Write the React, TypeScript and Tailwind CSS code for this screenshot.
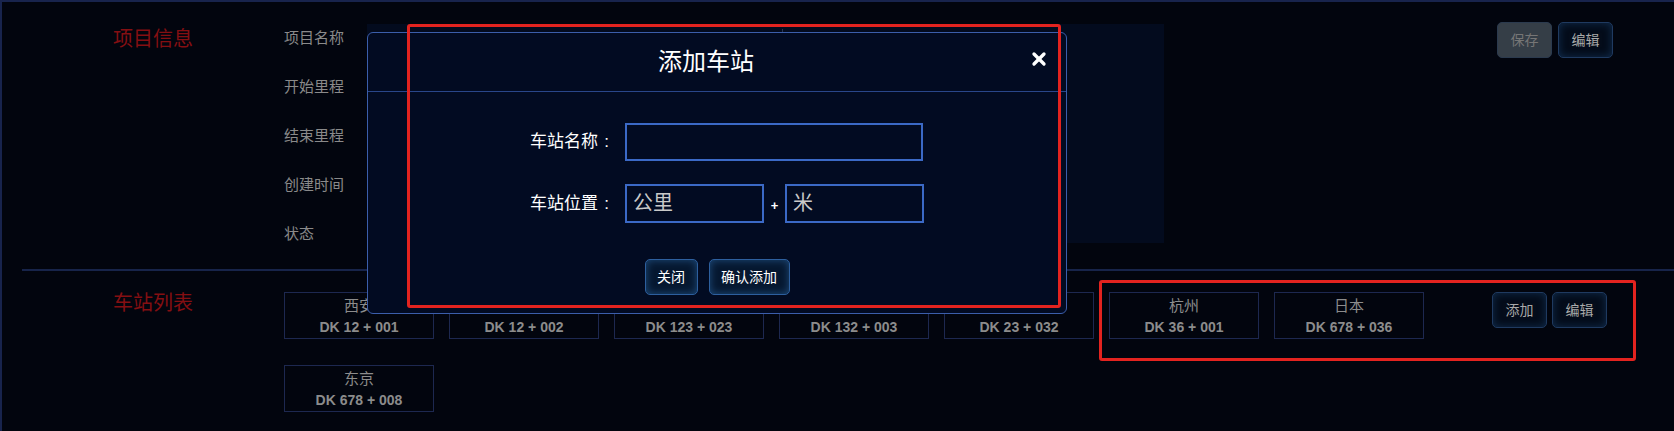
import { X } from "lucide-react";

const stations = [
  { name: "西安", km: "DK 12 + 001" },
  { name: "北京", km: "DK 12 + 002" },
  { name: "上海", km: "DK 123 + 023" },
  { name: "南京", km: "DK 132 + 003" },
  { name: "苏州", km: "DK 23 + 032" },
  { name: "杭州", km: "DK 36 + 001" },
  { name: "日本", km: "DK 678 + 036" },
  { name: "东京", km: "DK 678 + 008" },
];

const fields = ["项目名称", "开始里程", "结束里程", "创建时间", "状态"];

function GlowButton({ children, className = "" }: { children: React.ReactNode; className?: string }) {
  return (
    <button
      type="button"
      className={
        "h-[36px] rounded-[5px] border border-[#1f3a60] bg-[#040c1a] text-[14px] text-[#a9a9a9] shadow-[inset_0_0_8px_rgba(40,110,180,0.35)] " +
        className
      }
    >
      {children}
    </button>
  );
}

function FieldLabel({ text }: { text: string }) {
  return (
    <label className="flex w-[85px] text-[17px] text-white">
      <span>{text}</span>
      <span className="w-[17px] text-center">:</span>
    </label>
  );
}

export default function App() {
  return (
    <div className="relative min-h-screen w-full overflow-hidden border-l-2 border-t-2 border-[#18244d] bg-[#02050e] font-['Liberation_Sans','Noto_Sans_CJK_SC',sans-serif]">
      {/* 项目信息 */}
      <section className="flex h-[267px] pl-[20px] pr-[61px]">
        <div className="flex w-[262px] justify-center pt-[12px]">
          <h2 className="flex h-[49px] items-center text-[20px] text-[#850f12]">项目信息</h2>
        </div>
        <div className="w-[83px] pt-[12px]">
          {fields.map((f) => (
            <div key={f} className="flex h-[49px] items-center text-[15px] text-[#8a8a8a]">
              {f}
            </div>
          ))}
        </div>
        <div className="mt-[22px] h-[219px] w-[797px] bg-[#030b1e]">
          <div className="flex h-[32px] items-center text-[15px] text-[#555b66]">
            <span className="ml-[14px] w-[337px]">测试项目</span>
            <span className="w-[63px]">项目描述</span>
            <span className="ml-[1px] border-l border-[#2a3550] pl-[18px]">这是一个测试项目的描述信息</span>
          </div>
        </div>
        <div className="ml-auto mt-[20px] flex gap-[6px]">
          <button
            type="button"
            className="h-[36px] w-[55px] rounded-[5px] border border-[#2b3a4e] bg-[#353e47] text-[14px] text-[#767676]"
          >
            保存
          </button>
          <GlowButton className="w-[55px]">编辑</GlowButton>
        </div>
      </section>

      <div className="ml-[20px] h-[2px] bg-[#17244a]" />

      {/* 车站列表 */}
      <section className="flex pl-[20px]">
        <div className="flex w-[262px] justify-center pt-[18px]">
          <h2 className="text-[20px] leading-[28px] text-[#850f12]">车站列表</h2>
        </div>
        <div className="mt-[21px] flex w-[1160px] flex-wrap gap-x-[15px] gap-y-[26px]">
          {stations.map((s) => (
            <div
              key={s.km}
              className="flex h-[47px] w-[150px] flex-col items-center border border-[#1d2850] pt-[4px] text-[#8c8c8c]"
            >
              <span className="text-[15px] leading-[18px]">{s.name}</span>
              <span className="mt-[2px] text-[14px] font-bold leading-[20px]">{s.km}</span>
            </div>
          ))}
        </div>
        <div className="ml-[48px] mt-[21px] flex gap-[5px]">
          <GlowButton className="w-[55px]">添加</GlowButton>
          <GlowButton className="w-[55px]">编辑</GlowButton>
        </div>
      </section>

      {/* 添加车站 弹窗 */}
      <div className="absolute left-[365px] top-[30px] h-[282px] w-[700px] rounded-[6px] border border-[#3b5eab] bg-[#020b22]">
        <div className="flex h-[59px] items-center justify-center border-b border-[#29468a] pr-[22px]">
          <h3 className="text-[24px] text-white">添加车站</h3>
        </div>
        <button type="button" className="absolute right-[17px] top-[16px] text-white">
          <X size={20} strokeWidth={4} />
        </button>

        <div className="pt-[31px]">
          <div className="flex h-[38px] items-center pl-[162px]">
            <FieldLabel text="车站名称" />
            <input className="ml-[10px] h-[38px] w-[298px] border-2 border-[#3b69c6] bg-transparent px-[6px] text-[20px] text-white outline-none" />
          </div>
          <div className="mt-[23px] flex h-[39px] items-center pl-[162px]">
            <FieldLabel text="车站位置" />
            <input
              placeholder="公里"
              className="ml-[10px] h-[39px] w-[139px] border-2 border-[#3b69c6] bg-transparent px-[6px] text-[20px] text-white outline-none placeholder:text-[#c9c9c9]"
            />
            <span className="w-[21px] pt-[4px] text-center text-[13px] font-bold text-white">+</span>
            <input
              placeholder="米"
              className="h-[39px] w-[139px] border-2 border-[#3b69c6] bg-transparent px-[6px] text-[20px] text-white outline-none placeholder:text-[#c9c9c9]"
            />
          </div>
          <div className="mt-[36px] flex justify-center gap-[11px]">
            <button
              type="button"
              className="h-[36px] w-[53px] rounded-[5px] border border-[#2d5f9e] bg-[#061830] text-[14px] text-white shadow-[inset_0_0_9px_rgba(60,140,220,0.45)]"
            >
              关闭
            </button>
            <button
              type="button"
              className="h-[36px] w-[81px] rounded-[5px] border border-[#2d5f9e] bg-[#061830] text-[14px] text-white shadow-[inset_0_0_9px_rgba(60,140,220,0.45)]"
            >
              确认添加
            </button>
          </div>
        </div>
      </div>

      {/* 标注框 */}
      <div className="pointer-events-none absolute left-[405px] top-[22px] h-[284px] w-[654px] rounded-[3px] border-[3px] border-[#e3231f]" />
      <div className="pointer-events-none absolute left-[1097px] top-[278px] h-[81px] w-[537px] rounded-[3px] border-[3px] border-[#e3231f]" />
    </div>
  );
}
